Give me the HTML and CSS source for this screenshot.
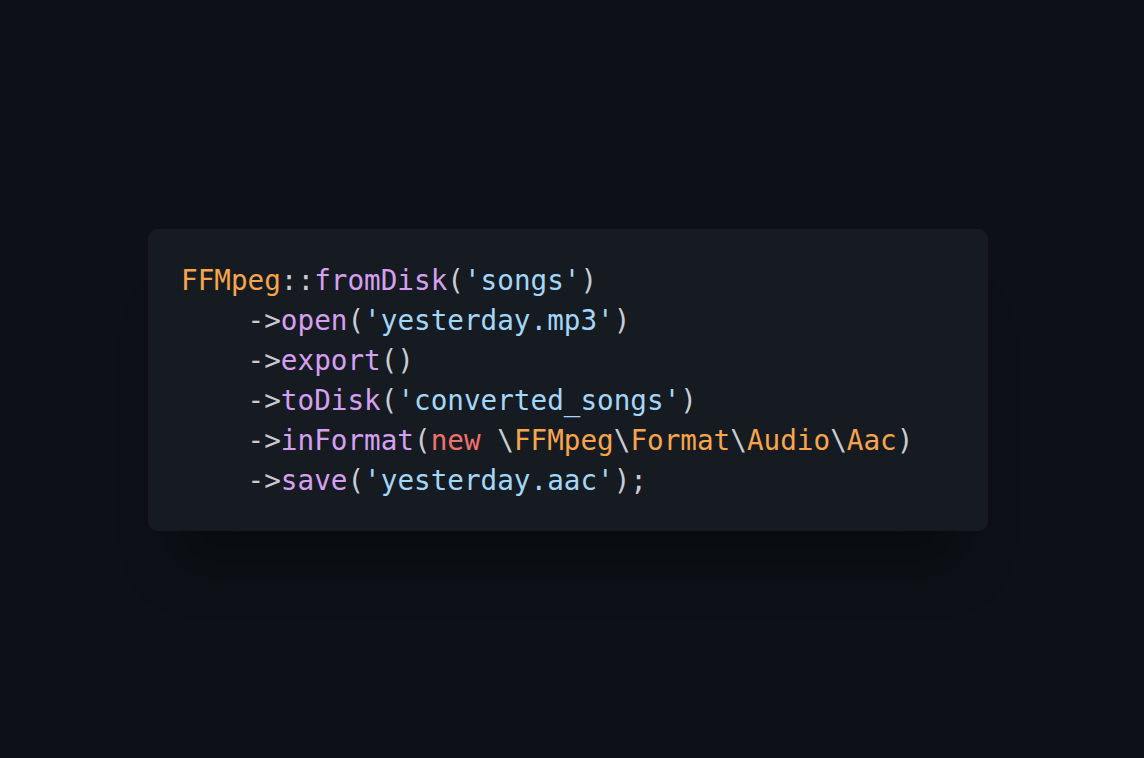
FILE: index.html
```html
<!DOCTYPE html>
<html lang="en">
<head>
<meta charset="utf-8">
<title>FFMpeg</title>
<link rel="stylesheet" href="styles.css">
</head>
<body>
<main class="stage">
<div class="card">
<pre class="code"><span class="cls">FFMpeg</span><span class="p">::</span><span class="fn">fromDisk</span><span class="p">(</span><span class="str">'songs'</span><span class="p">)</span>
<span class="p">    -&gt;</span><span class="fn">open</span><span class="p">(</span><span class="str">'yesterday.mp3'</span><span class="p">)</span>
<span class="p">    -&gt;</span><span class="fn">export</span><span class="p">()</span>
<span class="p">    -&gt;</span><span class="fn">toDisk</span><span class="p">(</span><span class="str">'converted_songs'</span><span class="p">)</span>
<span class="p">    -&gt;</span><span class="fn">inFormat</span><span class="p">(</span><span class="kw">new</span><span class="p"> \</span><span class="cls">FFMpeg</span><span class="p">\</span><span class="cls">Format</span><span class="p">\</span><span class="cls">Audio</span><span class="p">\</span><span class="cls">Aac</span><span class="p">)</span>
<span class="p">    -&gt;</span><span class="fn">save</span><span class="p">(</span><span class="str">'yesterday.aac'</span><span class="p">);</span></pre>
</div>
</main>
</body>
</html>
```
FILE: styles.css
```css
html, body {
  margin: 0;
  padding: 0;
  height: 100%;
  background: #0d1117;
}
.stage {
  height: 758px;
  display: flex;
  align-items: center;
  justify-content: center;
  padding: 2px 8px 0 0;
  box-sizing: border-box;
}
.card {
  width: 840px;
  box-sizing: border-box;
  padding: 32px 33px 30px 33px;
  background: #161b22;
  border-radius: 10px;
  box-shadow: 0 60px 50px -30px rgba(0, 0, 0, 0.35);
}
.code {
  margin: 0;
  font-family: "DejaVu Sans Mono", monospace;
  font-size: 27.65px;
  line-height: 40px;
  color: #c9ccd3;
}
.cls { color: #f8a54e; }
.fn { color: #d6a0f2; }
.str { color: #a3d7fa; }
.kw { color: #f1716b; }
.p { color: #c9ccd3; }
```
